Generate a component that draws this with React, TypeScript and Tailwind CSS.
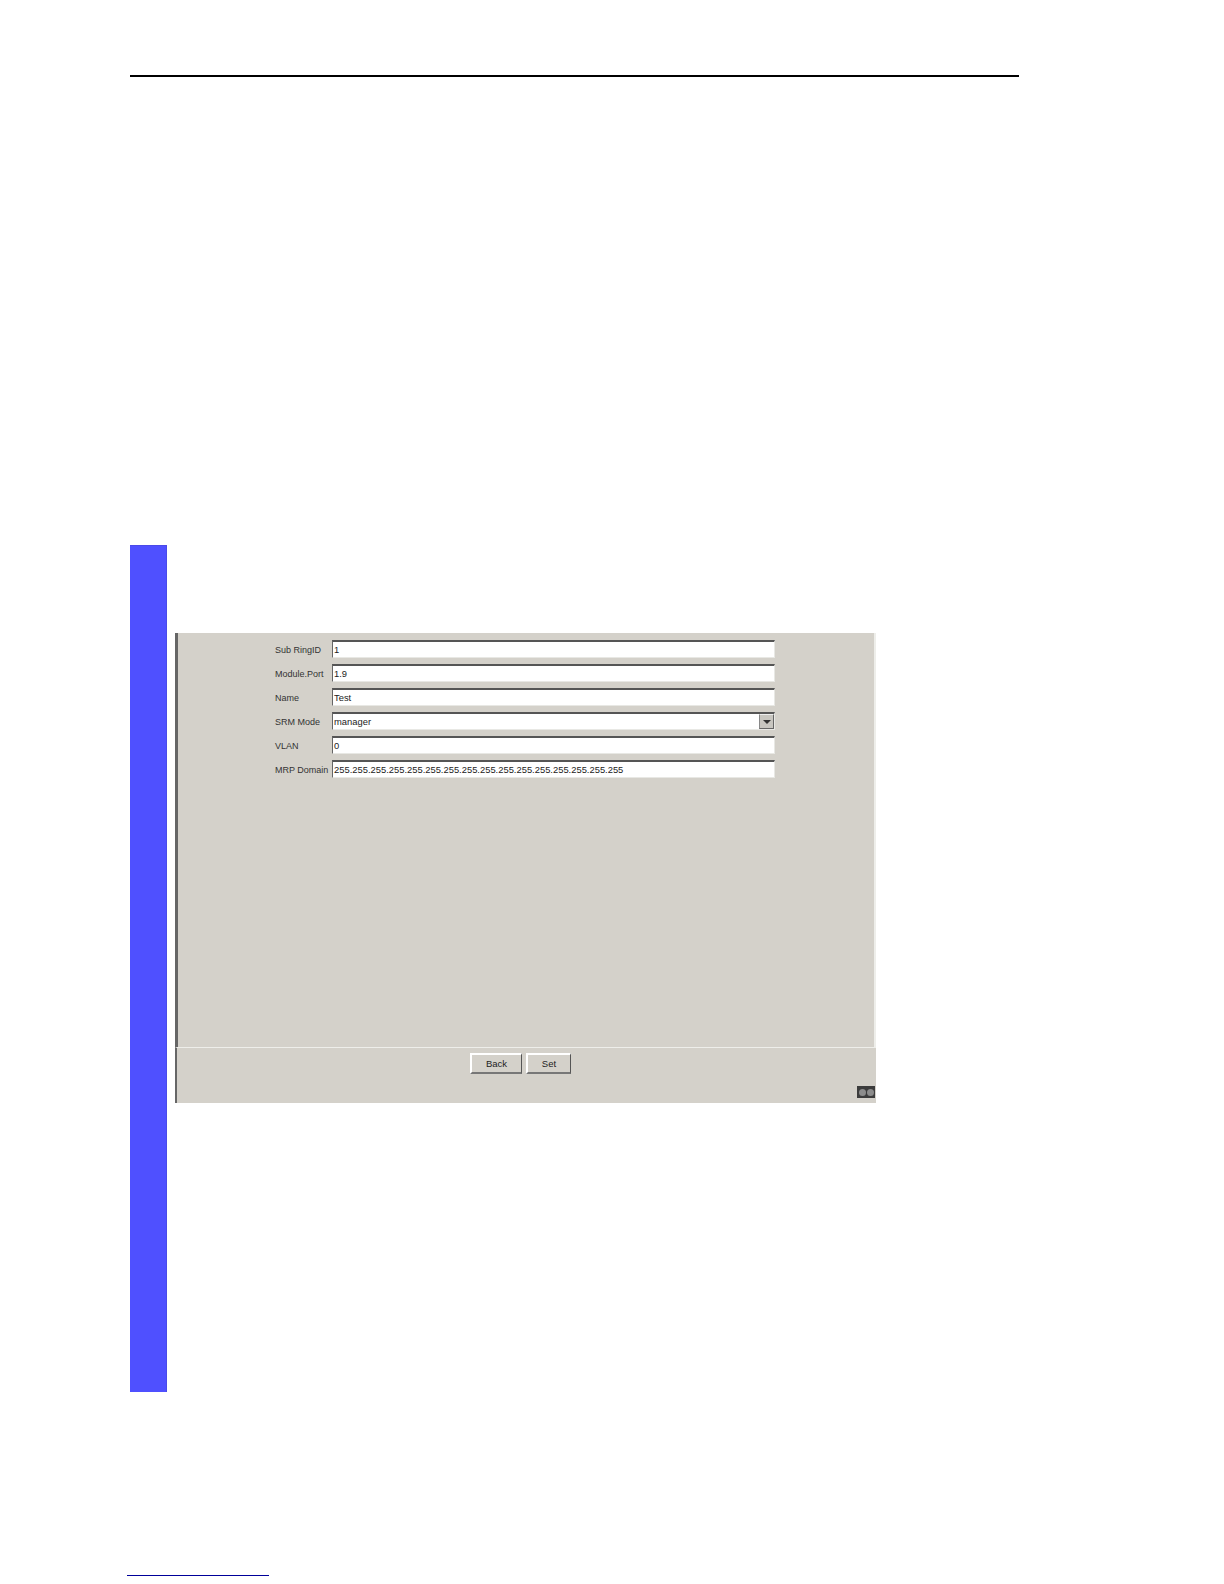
const rows = [
  { label: 'Sub RingID', value: '1' },
  { label: 'Module.Port', value: '1.9' },
  { label: 'Name', value: 'Test' },
  { label: 'SRM Mode', value: 'manager', select: true },
  { label: 'VLAN', value: '0' },
  { label: 'MRP Domain', value: '255.255.255.255.255.255.255.255.255.255.255.255.255.255.255.255' },
];

const Row = ({ label, value, select }: { label: string; value: string; select?: boolean }) => (
  <div className="flex h-[18px] items-center">
    <span className="w-[57px] whitespace-nowrap pt-[3px] text-[9px] text-[#333]">{label}</span>
    <div className="flex h-[18px] w-[443px] items-center border-t-2 border-l border-b border-r border-t-[#555] border-l-[#666] border-b-[#e8e8e4] border-r-[#e8e8e4] bg-white pl-[1px] text-[9.4px] text-[#222]">
      <span className="flex-1 pt-[1px]">{value}</span>
      {select && (
        <div className="flex h-[15px] w-[15px] items-center justify-center border border-t-[#eee] border-l-[#888] border-b-[#666] border-r-[#666] bg-[#c8c6c0]">
          <div className="h-0 w-0 border-x-[4px] border-t-[4px] border-x-transparent border-t-[#333]" />
        </div>
      )}
    </div>
  </div>
);

const Btn = ({ label, w }: { label: string; w: string }) => (
  <button className={`${w} h-[21px] border-t-2 border-l-2 border-b-2 border-r border-t-white border-l-white border-b-[#777] border-r-[#555] bg-[#d4d1ca] pt-[1px] text-[9.5px] text-[#222]`}>
    {label}
  </button>
);

export default function App() {
  return (
    <div className="h-[1584px] w-[1224px] overflow-hidden bg-white font-['Liberation_Sans',sans-serif]">
      <div className="ml-[130px] w-[889px] pt-[75px]">
        <div className="h-[2px] bg-black" />
      </div>
      <div className="ml-[130px] mt-[468px] flex">
        <div className="h-[847px] w-[37px] border-r border-t border-[#4a4ae8] bg-[#4f50ff]" />
        <div className="ml-[8px] mt-[88px] flex h-[470px] w-[701px] flex-col bg-[#d4d1ca]">
          <div className="flex h-[414px] flex-col gap-[6px] border-l-[3px] border-r-2 border-l-[#666] border-r-[#eeeeea] pl-[97px] pt-[7px]">
            {rows.map((r) => (
              <Row key={r.label} {...r} />
            ))}
          </div>
          <div className="relative flex-1 border-l-2 border-t border-l-[#666] border-t-[#eeeeea]">
            <div className="ml-[293px] mt-[5px] flex gap-[4px]">
              <Btn label="Back" w="w-[52px]" />
              <Btn label="Set" w="w-[45px]" />
            </div>
            <div className="absolute bottom-[5px] right-[1px] flex h-[12px] w-[18px] items-center justify-center gap-[1px] bg-[#3c3c3c]">
              <div className="h-[7px] w-[7px] rounded-full bg-[#8c8c8c]" />
              <div className="h-[7px] w-[7px] rounded-full bg-[#8c8c8c]" />
            </div>
          </div>
        </div>
      </div>
      <div className="ml-[127px] mt-[183px] h-[1px] w-[142px] bg-[#00009a]" />
    </div>
  );
}
